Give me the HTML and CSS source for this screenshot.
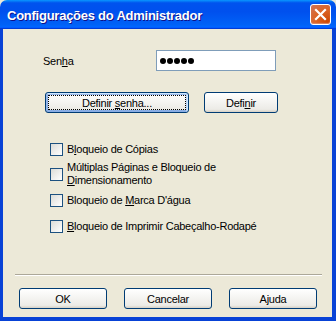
FILE: index.html
```html
<!DOCTYPE html>
<html lang="pt">
<head>
<meta charset="utf-8">
<title>Configurações do Administrador</title>
<link rel="stylesheet" href="styles.css">
</head>
<body>
<div class="window">
  <div class="titlebar">
    <span class="title">Configurações do Administrador</span>
    <span class="close" aria-label="Fechar">
      <svg width="13" height="13" viewBox="0 0 13 13"><path d="M2 2 L11 11 M11 2 L2 11" stroke="#fff" stroke-width="2.2" stroke-linecap="square"/></svg>
    </span>
  </div>
  <div class="frame">
    <div class="pw-row">
      <span class="pw-label">Sen<u>h</u>a</span>
      <div class="pw-input"><i class="dot"></i><i class="dot"></i><i class="dot"></i><i class="dot"></i><i class="dot"></i></div>
    </div>
    <div class="btn-row">
      <button class="btn btn-default btn-wide"><span>Definir <u>s</u>enha...</span></button>
      <button class="btn btn-mid"><span>Defi<u>n</u>ir</span></button>
    </div>
    <div class="checks">
      <div class="check"><span class="box"></span><span class="check-label">B<u>l</u>oqueio de Cópias</span></div>
      <div class="check check-2"><span class="box"></span><span class="check-label">Múltiplas Páginas e Bloqueio de<br><u>D</u>imensionamento</span></div>
      <div class="check check-3"><span class="box"></span><span class="check-label">Bloqueio de <u>M</u>arca D'água</span></div>
      <div class="check check-4"><span class="box"></span><span class="check-label"><u>B</u>loqueio de Imprimir Cabeçalho-Rodapé</span></div>
    </div>
    <div class="sep"></div>
    <div class="footer">
      <button class="btn btn-foot"><span>OK</span></button>
      <button class="btn btn-foot"><span>Cancelar</span></button>
      <button class="btn btn-foot"><span>Ajuda</span></button>
    </div>
  </div>
</div>
</body>
</html>
```
FILE: styles.css
```css
* { box-sizing: border-box; }
html, body { margin: 0; padding: 0; }
body { width: 336px; height: 321px; overflow: hidden; background: #ece9d8; }
.window {
  width: 336px; height: 321px;
  display: flex; flex-direction: column;
  font-family: "Liberation Sans", Arial, sans-serif;
  font-size: 11px; color: #000;
  letter-spacing: -0.25px;
}
.titlebar {
  height: 29px; flex: none;
  display: flex; align-items: center; justify-content: space-between;
  padding: 0 5px 0 7px;
  border-radius: 7px 7px 0 0;
  background: linear-gradient(180deg, #0997ff 0%, #0053ee 10%, #0050ee 40%, #0062f7 85%, #0066ff 92%, #005bff 95%, #003dd7 97%, #003dd7 100%);
}
.title {
  color: #fff; font-weight: bold; font-size: 13px;
  font-family: "Liberation Sans", Arial, sans-serif;
  letter-spacing: -0.25px;
  text-shadow: 1px 1px #0f1089;
  padding-top: 1px;
}
.close {
  width: 21px; height: 21px;
  display: flex; align-items: center; justify-content: center;
  border: 1px solid #fff; border-radius: 3px;
  background: radial-gradient(circle at 90% 90%, #cc4600 0%, #dc6527 55%, #cd7359 100%);
  box-shadow: inset 0 -1px 1px #da8a6b;
}
.frame {
  flex: 1;
  background: #ece9d8;
  border-left: 3px solid #0842d6;
  border-right: 4px solid #0842d6;
  border-bottom: 4px solid #0842d6;
  display: flex; flex-direction: column;
}
.pw-row {
  display: flex; align-items: center;
  margin: 21px 0 0 40px;
}
.pw-label { width: 113px; }
.pw-input {
  width: 120px; height: 21px;
  border: 1px solid #7f9db9; background: #fff;
  display: flex; align-items: center; gap: 1px;
  padding-left: 3px;
}
.dot { width: 6px; height: 6px; border-radius: 50%; background: #000; display: block; }
u { text-decoration: underline; text-underline-offset: 1px; }

.btn-row { display: flex; gap: 15px; margin: 21px 0 0 42px; }
.btn {
  position: relative;
  height: 21px; padding: 0;
  font: inherit; color: #000; letter-spacing: inherit;
  border: 1px solid #003c74; border-radius: 3px;
  background: linear-gradient(180deg, #fff 0%, #ecebe6 86%, #d6d0c5 100%);
  display: flex; align-items: center; justify-content: center;
}
.btn-wide { width: 144px; }
.btn-mid { width: 74px; }
.btn-default {
  box-shadow: inset -1px 1px #cee7ff, inset 1px 2px #98b8ea, inset -2px 2px #bcd4f6, inset 1px -1px #89ade4, inset 2px -2px #89ade4;
}
.btn-default::after {
  content: ""; position: absolute; inset: 2px;
  border: 1px dotted #000;
}

.checks { display: flex; flex-direction: column; margin: 30px 0 0 47px; }
.check { display: flex; align-items: center; gap: 4px; }
.check-2 { margin-top: 5px; }
.check-3 { margin-top: 7px; }
.check-4 { margin-top: 13px; }
.box {
  width: 13px; height: 13px; flex: none;
  border: 1px solid #1c5180;
  background: linear-gradient(135deg, #dcdcd7 0%, #fff 100%);
}
.check-label { line-height: 13px; }

.sep {
  margin: 41px 0 0 12px; width: 307px;
  border-top: 1px solid #aca899;
  border-bottom: 1px solid #fff;
}
.footer { display: flex; gap: 17px; margin: 12px 0 0 16px; }
.btn-foot { width: 88px; }
```
